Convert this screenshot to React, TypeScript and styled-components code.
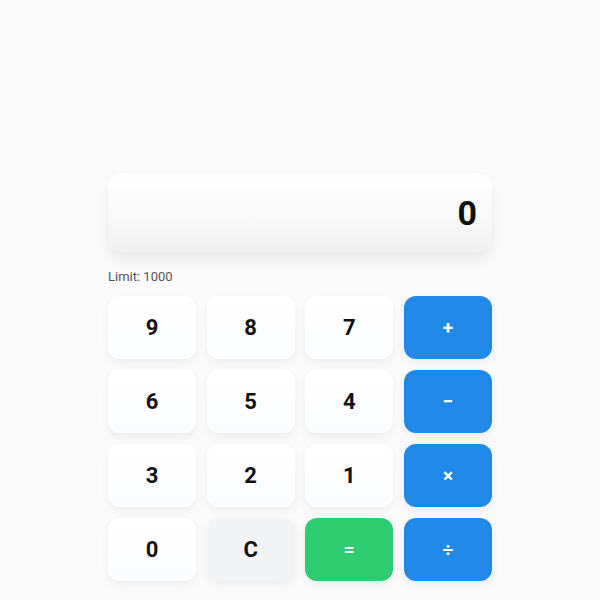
import React from "react";
import styled, { createGlobalStyle } from "styled-components";

const GlobalStyle = createGlobalStyle`
  html, body {
    margin: 0;
    padding: 0;
    background: #fafafa;
    font-family: Roboto, "Liberation Sans", sans-serif;
  }
`;

const Page = styled.div`
  min-height: 600px;
  display: flex;
  justify-content: center;
  padding-top: 173px;
  box-sizing: border-box;
`;

const Calculator = styled.div`
  width: 384px;
  display: flex;
  flex-direction: column;
`;

const Display = styled.div`
  height: 80px;
  border-radius: 14px;
  background: linear-gradient(180deg, #ffffff 0%, #f8f8f8 60%, #f1f1f1 100%);
  box-shadow: 0 8px 16px rgba(0, 0, 0, 0.06), 0 1px 3px rgba(0, 0, 0, 0.03);
  display: flex;
  align-items: center;
  justify-content: flex-end;
  padding: 0 15px;
  box-sizing: border-box;
  font-size: 34px;
  font-weight: 700;
  color: #111;
`;

const Limit = styled.div`
  margin-top: 16px;
  font-size: 13px;
  line-height: 16px;
  color: #555;
`;

const Keypad = styled.div`
  margin-top: 11px;
  display: grid;
  grid-template-columns: repeat(4, 1fr);
  grid-auto-rows: 63px;
  gap: 11px 10.6px;
`;

type Variant = "num" | "op" | "eq" | "clear";

const backgrounds: Record<Variant, string> = {
  num: "linear-gradient(180deg, #ffffff 0%, #fbfcfe 100%)",
  op: "#2089e8",
  eq: "#2ecc71",
  clear: "#f1f3f5",
};

const Key = styled.button<{ $variant: Variant }>`
  border: none;
  border-radius: 12px;
  background: ${(p) => backgrounds[p.$variant]};
  color: ${(p) => (p.$variant === "op" || p.$variant === "eq" ? "#fff" : "#111")};
  font-family: Roboto, "Liberation Sans", sans-serif;
  font-weight: 700;
  font-size: ${(p) => (p.$variant === "op" || p.$variant === "eq" ? "19px" : "22px")};
  box-shadow: ${(p) =>
    p.$variant === "num" || p.$variant === "clear"
      ? "0 4px 10px rgba(0, 0, 0, 0.05)"
      : "0 4px 10px rgba(0, 0, 0, 0.06)"};
  cursor: pointer;
  display: flex;
  align-items: center;
  justify-content: center;
  padding: 0;
`;

const keys: { label: string; variant: Variant }[] = [
  { label: "9", variant: "num" },
  { label: "8", variant: "num" },
  { label: "7", variant: "num" },
  { label: "+", variant: "op" },
  { label: "6", variant: "num" },
  { label: "5", variant: "num" },
  { label: "4", variant: "num" },
  { label: "−", variant: "op" },
  { label: "3", variant: "num" },
  { label: "2", variant: "num" },
  { label: "1", variant: "num" },
  { label: "×", variant: "op" },
  { label: "0", variant: "num" },
  { label: "C", variant: "clear" },
  { label: "=", variant: "eq" },
  { label: "÷", variant: "op" },
];

export default function App() {
  return (
    <>
      <GlobalStyle />
      <Page>
        <Calculator>
          <Display>0</Display>
          <Limit>Limit: 1000</Limit>
          <Keypad>
            {keys.map((k) => (
              <Key key={k.label} $variant={k.variant}>
                {k.label}
              </Key>
            ))}
          </Keypad>
        </Calculator>
      </Page>
    </>
  );
}
